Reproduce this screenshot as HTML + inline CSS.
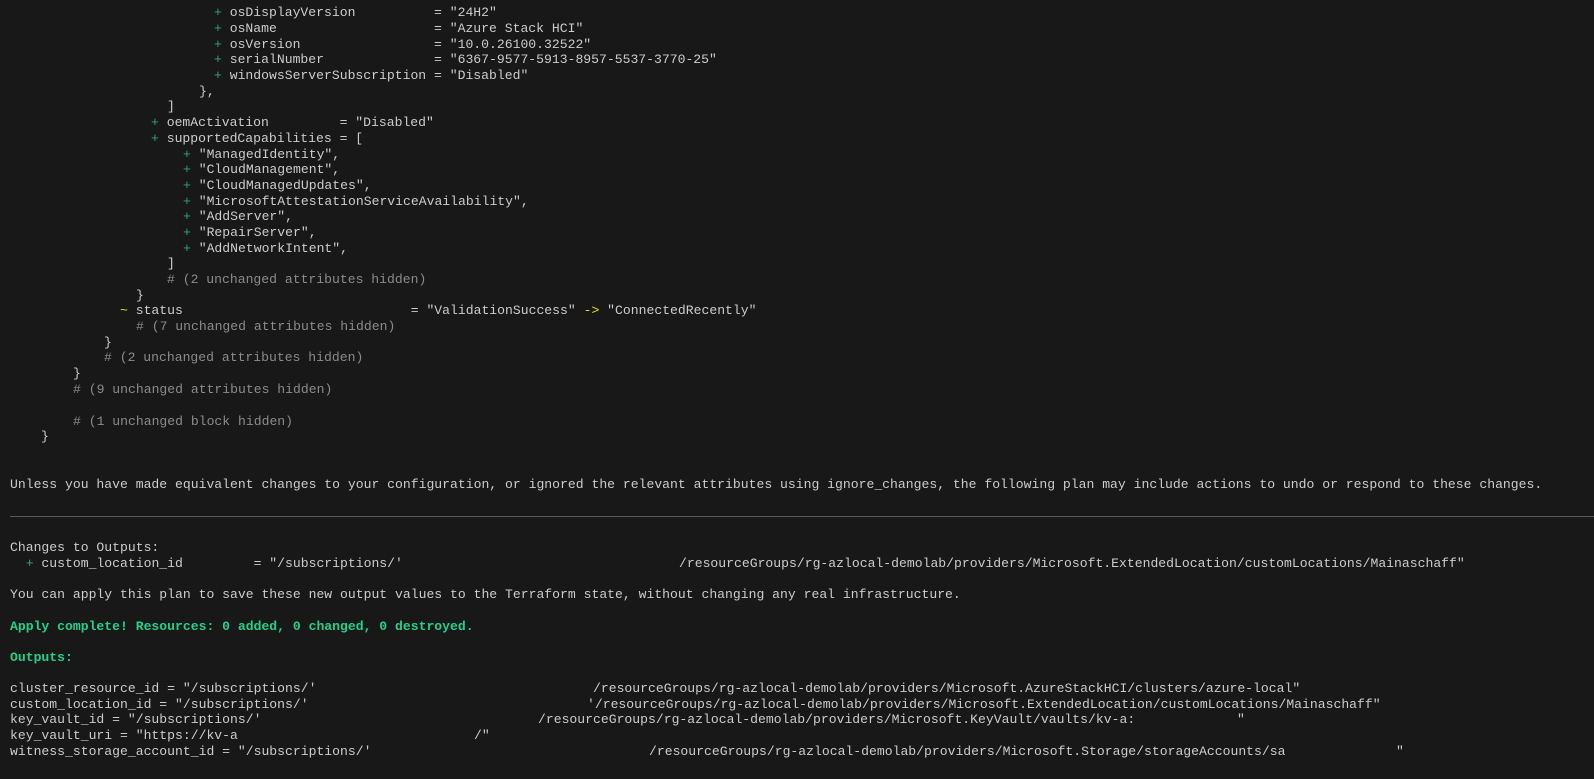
<!DOCTYPE html>
<html><head><meta charset="utf-8"><style>
html,body{margin:0;padding:0;background:#181818;width:1594px;height:779px;overflow:hidden}
.l{position:absolute;height:16px;line-height:16px;font-family:"Liberation Mono",monospace;font-size:13.1px;color:#cccccc;white-space:pre}
.g{color:#2ea37a}.y{color:#e5e510}.c{color:#8b8b8b}.b{color:#23d18b;font-weight:bold}
.hr{position:absolute;left:10px;right:0;top:516px;height:1px;background:#5a5a5a}
</style></head><body>
<div class="l" style="top:5px;left:214px"><span class="g">+</span> osDisplayVersion          = "24H2"</div>
<div class="l" style="top:21px;left:214px"><span class="g">+</span> osName                    = "Azure Stack HCI"</div>
<div class="l" style="top:37px;left:214px"><span class="g">+</span> osVersion                 = "10.0.26100.32522"</div>
<div class="l" style="top:52px;left:214px"><span class="g">+</span> serialNumber              = "6367-9577-5913-8957-5537-3770-25"</div>
<div class="l" style="top:68px;left:214px"><span class="g">+</span> windowsServerSubscription = "Disabled"</div>
<div class="l" style="top:84px;left:199px">},</div>
<div class="l" style="top:99px;left:167px">]</div>
<div class="l" style="top:115px;left:151px"><span class="g">+</span> oemActivation         = "Disabled"</div>
<div class="l" style="top:131px;left:151px"><span class="g">+</span> supportedCapabilities = [</div>
<div class="l" style="top:147px;left:183px"><span class="g">+</span> "ManagedIdentity",</div>
<div class="l" style="top:162px;left:183px"><span class="g">+</span> "CloudManagement",</div>
<div class="l" style="top:178px;left:183px"><span class="g">+</span> "CloudManagedUpdates",</div>
<div class="l" style="top:194px;left:183px"><span class="g">+</span> "MicrosoftAttestationServiceAvailability",</div>
<div class="l" style="top:209px;left:183px"><span class="g">+</span> "AddServer",</div>
<div class="l" style="top:225px;left:183px"><span class="g">+</span> "RepairServer",</div>
<div class="l" style="top:241px;left:183px"><span class="g">+</span> "AddNetworkIntent",</div>
<div class="l" style="top:256px;left:167px">]</div>
<div class="l c" style="top:272px;left:167px"># (2 unchanged attributes hidden)</div>
<div class="l" style="top:288px;left:136px">}</div>
<div class="l" style="top:303px;left:120px"><span class="y">~</span> status                             = "ValidationSuccess" <span class="y">-&gt;</span> "ConnectedRecently"</div>
<div class="l c" style="top:319px;left:136px"># (7 unchanged attributes hidden)</div>
<div class="l" style="top:335px;left:104px">}</div>
<div class="l c" style="top:350px;left:104px"># (2 unchanged attributes hidden)</div>
<div class="l" style="top:366px;left:73px">}</div>
<div class="l c" style="top:382px;left:73px"># (9 unchanged attributes hidden)</div>
<div class="l c" style="top:414px;left:73px"># (1 unchanged block hidden)</div>
<div class="l" style="top:429px;left:41px">}</div>
<div class="l" style="top:477px;left:10px">Unless you have made equivalent changes to your configuration, or ignored the relevant attributes using ignore_changes, the following plan may include actions to undo or respond to these changes.</div>
<div class="hr"></div>
<div class="l" style="top:540px;left:10px">Changes to Outputs:</div>
<div class="l" style="top:556px;left:10px">  <span class="g">+</span> custom_location_id         = "/subscriptions/'</div>
<div class="l" style="top:556px;left:679px">/resourceGroups/rg-azlocal-demolab/providers/Microsoft.ExtendedLocation/customLocations/Mainaschaff"</div>
<div class="l" style="top:587px;left:10px">You can apply this plan to save these new output values to the Terraform state, without changing any real infrastructure.</div>
<div class="l b" style="top:619px;left:10px">Apply complete! Resources: 0 added, 0 changed, 0 destroyed.</div>
<div class="l b" style="top:650px;left:10px">Outputs:</div>
<div class="l" style="top:681px;left:10px">cluster_resource_id = "/subscriptions/'</div>
<div class="l" style="top:681px;left:593px">/resourceGroups/rg-azlocal-demolab/providers/Microsoft.AzureStackHCI/clusters/azure-local"</div>
<div class="l" style="top:697px;left:10px">custom_location_id = "/subscriptions/'</div>
<div class="l" style="top:697px;left:587px">'/resourceGroups/rg-azlocal-demolab/providers/Microsoft.ExtendedLocation/customLocations/Mainaschaff"</div>
<div class="l" style="top:712px;left:10px">key_vault_id = "/subscriptions/'</div>
<div class="l" style="top:712px;left:538px">/resourceGroups/rg-azlocal-demolab/providers/Microsoft.KeyVault/vaults/kv-a:</div>
<div class="l" style="top:712px;left:1237px">"</div>
<div class="l" style="top:728px;left:10px">key_vault_uri = "https://kv-a</div>
<div class="l" style="top:728px;left:474px">/"</div>
<div class="l" style="top:744px;left:10px">witness_storage_account_id = "/subscriptions/'</div>
<div class="l" style="top:744px;left:649px">/resourceGroups/rg-azlocal-demolab/providers/Microsoft.Storage/storageAccounts/sa</div>
<div class="l" style="top:744px;left:1396px">"</div>
</body></html>
